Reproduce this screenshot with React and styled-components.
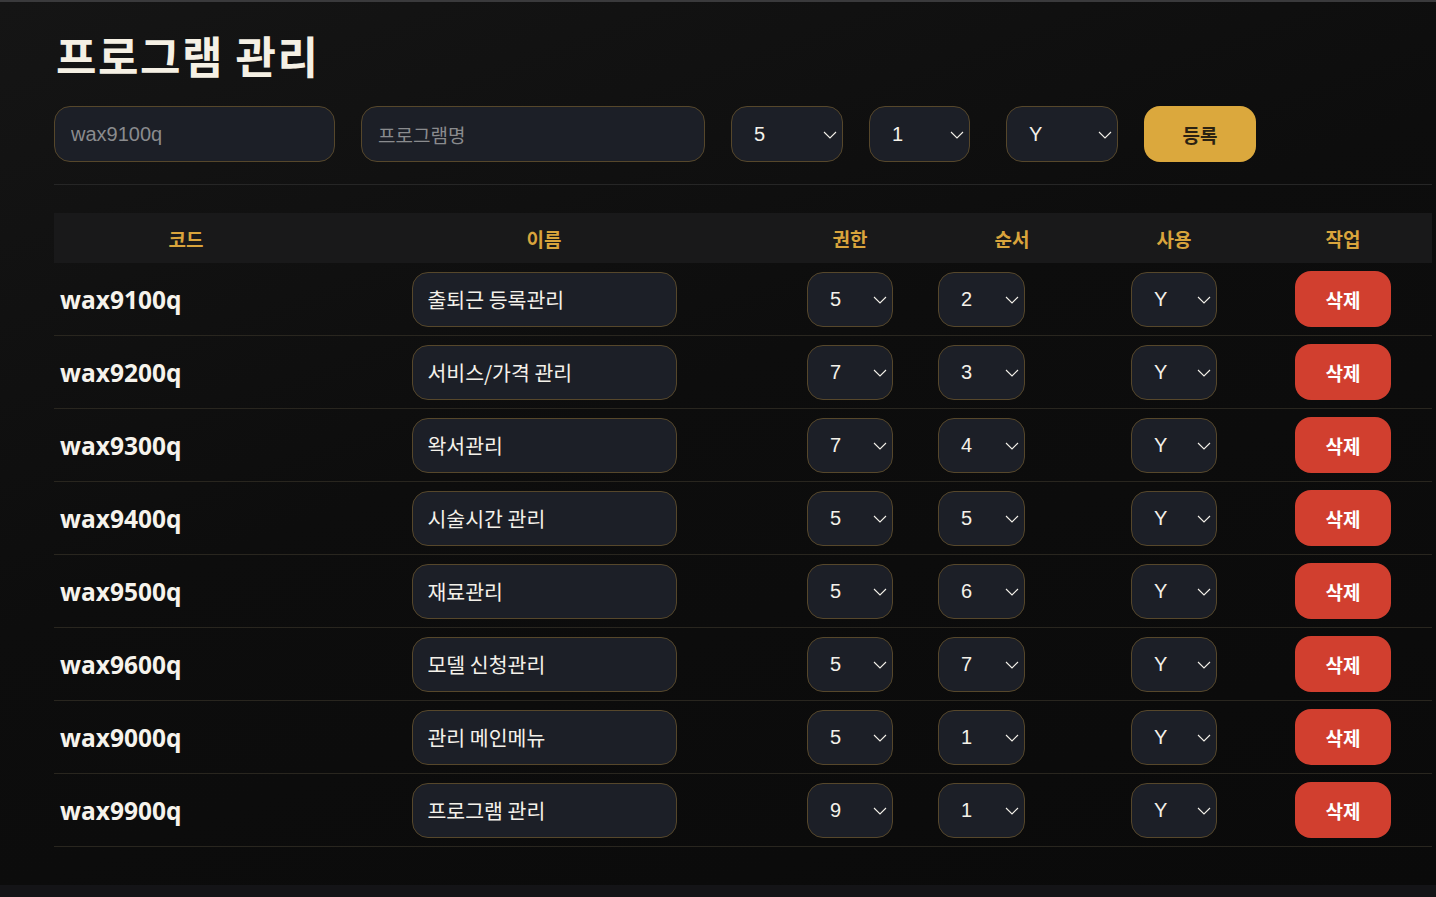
import React from "react";
import styled, { createGlobalStyle } from "styled-components";

const GlobalStyle = createGlobalStyle`
  html, body {
    margin: 0;
    padding: 0;
    background: #141417;
  }
  body {
    font-family: "Open Sans", "Noto Sans CJK KR", sans-serif;
    color: #f4f1ea;
  }
  * { box-sizing: border-box; }
`;

const rows = [
  { code: "wax9100q", name: "출퇴근 등록관리", auth: "5", order: "2", use: "Y" },
  { code: "wax9200q", name: "서비스/가격 관리", auth: "7", order: "3", use: "Y" },
  { code: "wax9300q", name: "왁서관리", auth: "7", order: "4", use: "Y" },
  { code: "wax9400q", name: "시술시간 관리", auth: "5", order: "5", use: "Y" },
  { code: "wax9500q", name: "재료관리", auth: "5", order: "6", use: "Y" },
  { code: "wax9600q", name: "모델 신청관리", auth: "5", order: "7", use: "Y" },
  { code: "wax9000q", name: "관리 메인메뉴", auth: "5", order: "1", use: "Y" },
  { code: "wax9900q", name: "프로그램 관리", auth: "9", order: "1", use: "Y" },
];

const authOptions = ["1", "2", "3", "4", "5", "6", "7", "8", "9"];
const orderOptions = ["1", "2", "3", "4", "5", "6", "7", "8", "9"];

const Page = styled.div`
  height: 885px;
  border-top: 2px solid #3a3a3c;
  background: linear-gradient(160deg, #151515 0%, #0d0d0d 45%, #0a0a0a 100%);
  padding: 0 4px 0 54px;
`;

const Title = styled.h1`
  margin: 27px 0 24px 2px;
  font-family: "Noto Sans CJK KR", sans-serif;
  font-size: 44px;
  font-weight: 700;
  letter-spacing: 1.5px;
  line-height: 53px;
  color: #f5f0e4;
`;

const Form = styled.div`
  display: flex;
  align-items: center;
  gap: 26px;
  padding-bottom: 22px;
  border-bottom: 1px solid #262626;
`;

const Field = styled.input`
  flex-shrink: 0;
  width: ${(p) => p.$w}px;
  height: ${(p) => p.$h || 56}px;
  padding: 0 ${(p) => p.$px || 16}px;
  border: 1px solid #56472b;
  border-radius: 16px;
  background: #1c1f27;
  color: #f4f1ea;
  font-family: "Liberation Sans", "Noto Sans CJK KR", sans-serif;
  font-size: 20px;
  outline: none;
  &::placeholder {
    color: #8a8b8e;
  }
`;

const NameField = styled(Field)`
  font-family: "Noto Sans CJK KR", sans-serif;
  font-size: 20.5px;
  &::placeholder {
    font-size: 19px;
  }
`;

const SelectWrap = styled.div`
  position: relative;
  width: ${(p) => p.$w}px;
  height: ${(p) => p.$h || 56}px;
  margin-left: ${(p) => p.$ml || 0}px;
  flex-shrink: 0;
`;

const Select = styled.select`
  appearance: none;
  width: 100%;
  height: 100%;
  padding: 0 0 0 22px;
  border: 1px solid #56472b;
  border-radius: 16px;
  background: #1c1f27;
  color: #f4f1ea;
  font-family: "Liberation Sans", sans-serif;
  font-size: 20px;
  outline: none;
`;

const Chevron = styled.svg`
  position: absolute;
  right: 6px;
  top: 50%;
  width: 14px;
  height: 8px;
  margin-top: -3px;
  pointer-events: none;
`;

function Dropdown({ value, options, w, h, ml }) {
  return (
    <SelectWrap $w={w} $h={h} $ml={ml}>
      <Select defaultValue={value}>
        {options.map((o) => (
          <option key={o} value={o}>
            {o}
          </option>
        ))}
      </Select>
      <Chevron viewBox="0 0 14 8" fill="none">
        <path d="M1 1l6 6 6-6" stroke="#f4f1ea" strokeWidth="1.1" />
      </Chevron>
    </SelectWrap>
  );
}

const Button = styled.button`
  flex-shrink: 0;
  width: ${(p) => p.$w}px;
  height: 56px;
  border: none;
  border-radius: 16px;
  background: ${(p) => (p.$danger ? "#d13f2f" : "#dba83d")};
  color: ${(p) => (p.$danger ? "#ffffff" : "#2b2212")};
  font-family: "Noto Sans CJK KR", sans-serif;
  font-size: 19px;
  font-weight: 700;
  cursor: pointer;
`;

const Table = styled.div`
  margin-top: 28px;
`;

const cols = "264px 452px 160px 164px 160px 178px";

const HeadRow = styled.div`
  display: grid;
  grid-template-columns: ${cols};
  height: 50px;
  align-items: center;
  background: #19191a;
`;

const HeadCell = styled.div`
  text-align: center;
  font-family: "Noto Sans CJK KR", sans-serif;
  font-size: 19px;
  font-weight: 700;
  color: #d9a43c;
`;

const Row = styled.div`
  display: grid;
  grid-template-columns: ${cols};
  height: 73px;
  align-items: center;
  border-bottom: 1px solid #29261f;
`;

const Cell = styled.div`
  display: flex;
  align-items: center;
  justify-content: ${(p) => (p.$left ? "flex-start" : "center")};
  padding-left: ${(p) => p.$pl || 0}px;
`;

const Code = styled.span`
  font-family: "Open Sans", sans-serif;
  font-size: 24.5px;
  font-weight: 700;
  color: #f6f3ec;
`;

export default function App() {
  return (
    <>
      <GlobalStyle />
      <Page>
        <Title>프로그램 관리</Title>
        <Form>
          <Field $w={281} placeholder="wax9100q" />
          <NameField $w={344} placeholder="프로그램명" />
          <Dropdown value="5" options={authOptions} w={112} />
          <Dropdown value="1" options={orderOptions} w={101} />
          <Dropdown value="Y" options={["Y", "N"]} w={112} ml={10} />
          <Button $w={112}>등록</Button>
        </Form>
        <Table>
          <HeadRow>
            <HeadCell>코드</HeadCell>
            <HeadCell>이름</HeadCell>
            <HeadCell>권한</HeadCell>
            <HeadCell>순서</HeadCell>
            <HeadCell>사용</HeadCell>
            <HeadCell>작업</HeadCell>
          </HeadRow>
          {rows.map((r) => (
            <Row key={r.code}>
              <Cell $left $pl={6}>
                <Code>{r.code}</Code>
              </Cell>
              <Cell>
                <NameField $w={265} $h={55} $px={15} defaultValue={r.name} />
              </Cell>
              <Cell>
                <Dropdown value={r.auth} options={authOptions} w={86} h={55} />
              </Cell>
              <Cell $left $pl={8}>
                <Dropdown value={r.order} options={orderOptions} w={87} h={55} />
              </Cell>
              <Cell>
                <Dropdown value={r.use} options={["Y", "N"]} w={86} h={55} />
              </Cell>
              <Cell>
                <Button $danger $w={96}>
                  삭제
                </Button>
              </Cell>
            </Row>
          ))}
        </Table>
      </Page>
    </>
  );
}
